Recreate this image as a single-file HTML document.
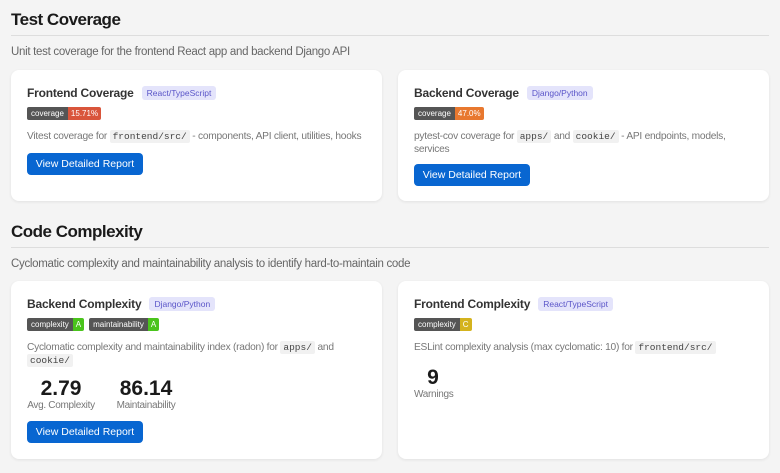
<!DOCTYPE html>
<html><head><meta charset="utf-8"><style>
*{box-sizing:border-box;margin:0;padding:0}
body{width:780px;height:473px;background:#f4f4f4;font-family:"Liberation Sans",sans-serif;color:#222;position:relative;overflow:hidden}
h2{position:absolute;left:11px;font-size:17px;font-weight:bold;color:#1a1a1a;letter-spacing:-0.5px}
.hr{position:absolute;left:11px;width:758px;height:1px;background:#ddd}
.sub{position:absolute;left:11px;font-size:11.5px;color:#666;letter-spacing:-0.3px}
.card{position:absolute;background:#fff;border-radius:8px;box-shadow:0 1px 3px rgba(0,0,0,.08);width:371px;padding:0 16px}
.t{position:absolute;left:16px;font-size:12px;font-weight:bold;color:#333;display:flex;align-items:center;letter-spacing:-0.2px}
.tag{font-size:8.5px;font-weight:normal;color:#5a55c8;background:#e4e4fb;border-radius:3px;padding:2px 5px;margin-left:8px;letter-spacing:0}
.badges{position:absolute;left:16px;display:flex;gap:5px}
.b{display:flex;font-size:8px;color:#fff;height:13px;line-height:13px;border-radius:2px;overflow:hidden}
.b span:first-child{background:#555;padding:0 4px}
.b span:last-child{padding:0 3px}
.d{position:absolute;left:16px;right:8px;font-size:10.2px;color:#777;line-height:13px;letter-spacing:-0.25px;white-space:nowrap}
code{font-family:"Liberation Mono",monospace;font-size:9.5px;background:#f1f1f1;color:#444;padding:1px 3px;border-radius:2px;letter-spacing:0}
.btn{position:absolute;left:16px;background:#0866d1;color:#fff;font-size:10.5px;border-radius:4px;width:116px;height:22px;line-height:22px;text-align:center}
.stat{position:absolute;text-align:center;white-space:nowrap}
.stat b{display:block;font-size:21px;color:#1a1a1a;line-height:22px}
.stat i{display:block;font-style:normal;font-size:10px;color:#777;letter-spacing:-0.3px}
</style></head><body>
<h2 style="top:10px">Test Coverage</h2>
<div class="hr" style="top:35px"></div>
<div class="sub" style="top:46px">Unit test coverage for the frontend React app and backend Django API</div>

<div class="card" style="left:11px;top:70px;height:131px">
<div class="t" style="top:16px">Frontend Coverage<span class="tag">React/TypeScript</span></div>
<div class="badges" style="top:37px"><div class="b"><span>coverage</span><span style="background:#d9553b">15.71%</span></div></div>
<div class="d" style="top:60px">Vitest coverage for <code>frontend/src/</code> - components, API client, utilities, hooks</div>
<div class="btn" style="top:83px">View Detailed Report</div>
</div>

<div class="card" style="left:398px;top:70px;height:131px">
<div class="t" style="top:16px">Backend Coverage<span class="tag">Django/Python</span></div>
<div class="badges" style="top:37px"><div class="b"><span>coverage</span><span style="background:#e8782f">47.0%</span></div></div>
<div class="d" style="top:60px">pytest-cov coverage for <code>apps/</code> and <code>cookie/</code> - API endpoints, models,<br>services</div>
<div class="btn" style="top:94px">View Detailed Report</div>
</div>

<h2 style="top:222px">Code Complexity</h2>
<div class="hr" style="top:247px"></div>
<div class="sub" style="top:258px">Cyclomatic complexity and maintainability analysis to identify hard-to-maintain code</div>

<div class="card" style="left:11px;top:281px;height:178px">
<div class="t" style="top:16px">Backend Complexity<span class="tag">Django/Python</span></div>
<div class="badges" style="top:37px"><div class="b"><span>complexity</span><span style="background:#4ac41c">A</span></div><div class="b"><span>maintainability</span><span style="background:#4ac41c">A</span></div></div>
<div class="d" style="top:60px">Cyclomatic complexity and maintainability index (radon) for <code>apps/</code> and<br><code>cookie/</code></div>
<div class="stat" style="left:16px;top:97px;width:68px"><b>2.79</b><i>Avg. Complexity</i></div>
<div class="stat" style="left:103px;top:97px;width:64px"><b>86.14</b><i>Maintainability</i></div>
<div class="btn" style="top:140px">View Detailed Report</div>
</div>

<div class="card" style="left:398px;top:281px;height:178px">
<div class="t" style="top:16px">Frontend Complexity<span class="tag">React/TypeScript</span></div>
<div class="badges" style="top:37px"><div class="b"><span>complexity</span><span style="background:#d4b31e">C</span></div></div>
<div class="d" style="top:60px">ESLint complexity analysis (max cyclomatic: 10) for <code>frontend/src/</code></div>
<div class="stat" style="left:16px;top:86px;width:38px;text-align:left"><b style="text-align:center;width:38px">9</b><i>Warnings</i></div>
</div>
</body></html>
